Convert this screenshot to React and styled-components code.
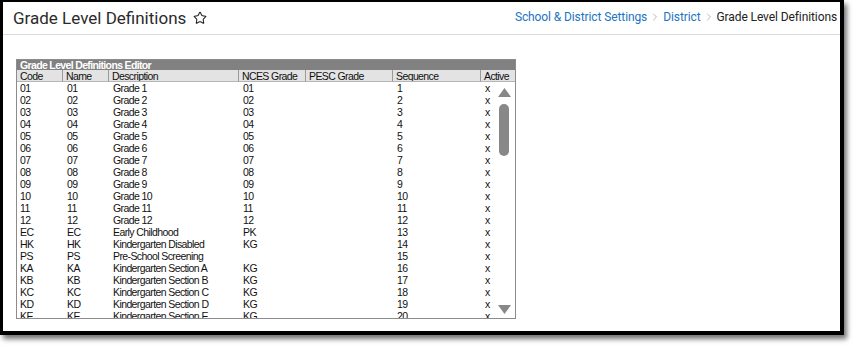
import React from 'react';
import styled, { createGlobalStyle } from 'styled-components';
import { Star, ChevronRight } from 'lucide-react';

const GlobalStyle = createGlobalStyle`
  html, body { margin: 0; padding: 0; background: #fff; }
  body { width: 858px; height: 349px; overflow: hidden; }
`;

const Page = styled.div`
  width: 858px;
  height: 349px;
  background: #fff;
`;

const Frame = styled.div`
  width: 837px;
  height: 329px;
  border-style: solid;
  border-color: #000;
  border-width: 2px 4px 4px 3px;
  box-shadow: 3px 4px 5px rgba(0, 0, 0, 0.55);
  background: #fff;
  display: flex;
  flex-direction: column;
  overflow: hidden;
`;

const Header = styled.div`
  height: 32px;
  border-bottom: 1px solid #dcdcdc;
  display: flex;
  align-items: center;
  justify-content: space-between;
  padding: 0 3px 0 10px;
`;

const Title = styled.div`
  display: flex;
  align-items: center;
  gap: 7px;
  font-family: Roboto, "Liberation Sans", sans-serif;
  font-size: 17px;
  color: #2b2b2b;
  margin-top: -1px;
`;

const Crumbs = styled.div`
  display: flex;
  align-items: center;
  gap: 2px;
  font-family: Roboto, "Liberation Sans", sans-serif;
  font-size: 12px;
  letter-spacing: -0.1px;
  margin-top: -2px;
`;

const Crumb = styled.span`
  color: ${p => (p.current ? '#222' : '#1d74bf')};
`;

const Body = styled.div`
  padding: 24px 0 0 13px;
`;

const Panel = styled.div`
  position: relative;
  width: 498px;
  height: 258px;
  border: 1px solid #8c8c8c;
  overflow: hidden;
  font-family: "Liberation Sans", Arial, sans-serif;
  font-size: 10.5px;
  letter-spacing: -0.6px;
  color: #111;
`;

const PanelTitle = styled.div`
  background: #818181;
  color: #fff;
  font-weight: bold;
  height: 10px;
  line-height: 10px;
  padding-left: 3px;
  letter-spacing: -0.65px;
`;

const Row = styled.div`
  display: grid;
  grid-template-columns: 46px 46px 130px 67px 87px 88px 1fr;
  height: 12px;
  line-height: 12px;
`;

const HeadCell = styled.div`
  background: #e3e3e3;
  border-right: 1px solid #9a9a9a;
  border-bottom: 1px solid #b5b5b5;
  padding-left: 3px;
  white-space: nowrap;
  overflow: hidden;
  &:last-child { border-right: none; }
`;

const Cell = styled.div`
  padding-left: ${p => (p.first ? '3px' : '4px')};
  white-space: nowrap;
  overflow: hidden;
`;

const Scroll = styled.div`
  position: absolute;
  right: 4px;
  top: 28px;
  bottom: 4px;
  width: 14px;
  display: flex;
  flex-direction: column;
  align-items: center;
  justify-content: space-between;
`;

const Thumb = styled.div`
  width: 10px;
  height: 52px;
  border-radius: 5px;
  background: #888;
  margin-top: 7px;
  margin-bottom: auto;
`;

const Arrow = ({ down }) => (
  <svg width="13" height="9" viewBox="0 0 13 9">
    <polygon points={down ? '0,0 13,0 6.5,9' : '0,9 13,9 6.5,0'} fill="#888" />
  </svg>
);

const columns = ['Code', 'Name', 'Description', 'NCES Grade', 'PESC Grade', 'Sequence', 'Active'];

const data = [
  ['01', '01', 'Grade 1', '01', '', '1'],
  ['02', '02', 'Grade 2', '02', '', '2'],
  ['03', '03', 'Grade 3', '03', '', '3'],
  ['04', '04', 'Grade 4', '04', '', '4'],
  ['05', '05', 'Grade 5', '05', '', '5'],
  ['06', '06', 'Grade 6', '06', '', '6'],
  ['07', '07', 'Grade 7', '07', '', '7'],
  ['08', '08', 'Grade 8', '08', '', '8'],
  ['09', '09', 'Grade 9', '09', '', '9'],
  ['10', '10', 'Grade 10', '10', '', '10'],
  ['11', '11', 'Grade 11', '11', '', '11'],
  ['12', '12', 'Grade 12', '12', '', '12'],
  ['EC', 'EC', 'Early Childhood', 'PK', '', '13'],
  ['HK', 'HK', 'Kindergarten Disabled', 'KG', '', '14'],
  ['PS', 'PS', 'Pre-School Screening', '', '', '15'],
  ['KA', 'KA', 'Kindergarten Section A', 'KG', '', '16'],
  ['KB', 'KB', 'Kindergarten Section B', 'KG', '', '17'],
  ['KC', 'KC', 'Kindergarten Section C', 'KG', '', '18'],
  ['KD', 'KD', 'Kindergarten Section D', 'KG', '', '19'],
  ['KE', 'KE', 'Kindergarten Section E', 'KG', '', '20'],
];

export default function App() {
  return (
    <Page>
      <GlobalStyle />
      <Frame>
        <Header>
          <Title>
            Grade Level Definitions
            <Star size={14} strokeWidth={1.8} color="#222" />
          </Title>
          <Crumbs>
            <Crumb>School &amp; District Settings</Crumb>
            <ChevronRight size={12} color="#b8b8b8" />
            <Crumb>District</Crumb>
            <ChevronRight size={12} color="#b8b8b8" />
            <Crumb current>Grade Level Definitions</Crumb>
          </Crumbs>
        </Header>
        <Body>
          <Panel>
            <PanelTitle>Grade Level Definitions Editor</PanelTitle>
            <Row>
              {columns.map(c => <HeadCell key={c}>{c}</HeadCell>)}
            </Row>
            {data.map(r => (
              <Row key={r[0]}>
                {r.map((v, i) => <Cell key={i} first={i === 0}>{v}</Cell>)}
                <Cell>x</Cell>
              </Row>
            ))}
            <Scroll>
              <Arrow />
              <Thumb />
              <Arrow down />
            </Scroll>
          </Panel>
        </Body>
      </Frame>
    </Page>
  );
}
